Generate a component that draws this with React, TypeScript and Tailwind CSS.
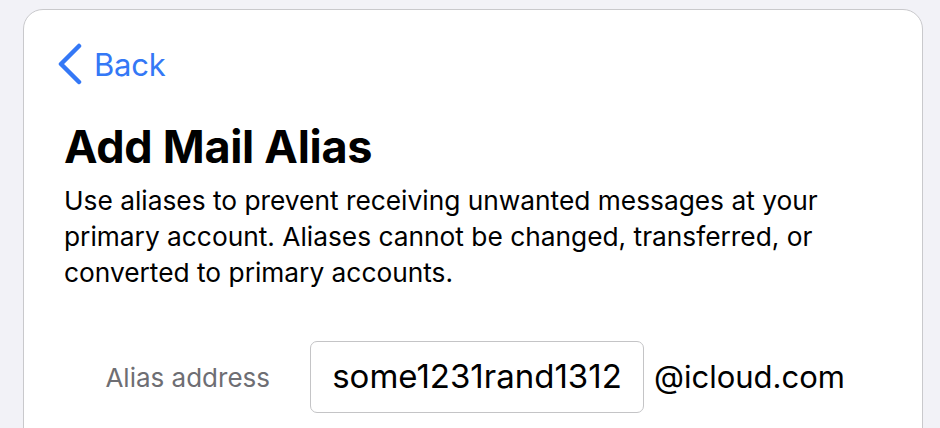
import React from 'react';

const ChevronLeft = () => (
  <svg width="26" height="44" viewBox="0 0 26 44" fill="none" className="shrink-0">
    <path d="M23 4 L5 22 L23 40" stroke="#3478f6" strokeWidth="4.5" strokeLinecap="round" strokeLinejoin="round" />
  </svg>
);

export default function App() {
  return (
    <div className="h-[428px] overflow-hidden bg-[#f2f2f7] pl-[23px] pr-[17px] pt-[9px] font-['Inter',sans-serif]">
      <div className="h-[600px] rounded-t-[20px] border border-[#c9c9cc] bg-white px-[40px] pt-[32px]">
        <button className="-ml-[8px] flex items-center gap-[12px] text-[31px] leading-none text-[#3478f6]">
          <ChevronLeft />
          <span className="tracking-[-0.2px]">Back</span>
        </button>
        <h1 className="mt-[38px] text-[45px] font-bold leading-none tracking-[-0.3px] text-black">Add Mail Alias</h1>
        <p className="mt-[14px] max-w-[820px] text-[26.3px] leading-[36px] text-black">
          Use aliases to prevent receiving unwanted messages at your primary account. Aliases cannot be changed, transferred, or converted to primary accounts.
        </p>
        <div className="mt-[50px] flex items-center">
          <label className="w-[246px] pr-[40px] text-right text-[26px] text-[#6e6e73]">Alias address</label>
          <div className="flex h-[72px] w-[334px] items-center justify-center rounded-[7px] border border-[#c4c4c6] text-[33px] text-black">
            some1231rand1312
          </div>
          <span className="ml-[10px] text-[31px] text-black">@icloud.com</span>
        </div>
      </div>
    </div>
  );
}
